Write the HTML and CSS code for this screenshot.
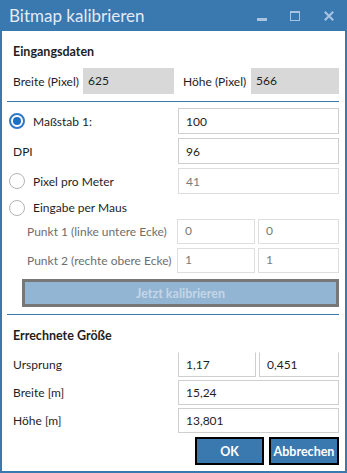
FILE: index.html
```html
<!DOCTYPE html>
<html lang="de">
<head>
    <meta charset="utf-8">
    <title>Bitmap kalibrieren</title>
    <link rel="stylesheet" href="styles.css">
</head>
<body>
    <div class="window">
        <!-- Titelleiste -->
        <div class="titlebar">
            <span class="title">Bitmap kalibrieren</span>
            <div class="caption-buttons">
                <svg class="cap-btn min" width="10" height="10" viewBox="0 0 10 10"><rect x="0" y="7" width="10" height="3" fill="#a9c5e2"/></svg>
                <svg class="cap-btn max" width="10" height="10" viewBox="0 0 10 10"><rect x="0.5" y="0.5" width="9" height="9" fill="none" stroke="#a9c5e2" stroke-width="1"/><rect x="0" y="0" width="10" height="2" fill="#a9c5e2"/></svg>
                <svg class="cap-btn close" width="10" height="10" viewBox="0 0 10 10"><path d="M0.8 0.8 L9.2 9.2 M9.2 0.8 L0.8 9.2" stroke="#a9c5e2" stroke-width="2"/></svg>
            </div>
        </div>

        <div class="content">
            <!-- Eingangsdaten -->
            <div class="heading">Eingangsdaten</div>
            <div class="size-row">
                <span class="label label-w">Breite (Pixel)</span>
                <div class="readonly box-w">625</div>
                <span class="label label-h">Höhe (Pixel)</span>
                <div class="readonly box-h">566</div>
            </div>

            <div class="separator"></div>

            <!-- Kalibrierung -->
            <div class="row first">
                <label class="radio-label"><span class="radio checked"></span>Maßstab 1:</label>
                <div class="input">100</div>
            </div>
            <div class="row">
                <span class="label plain">DPI</span>
                <div class="input">96</div>
            </div>
            <div class="row">
                <label class="radio-label"><span class="radio"></span>Pixel pro Meter</label>
                <div class="input disabled">41</div>
            </div>
            <div class="row mouse">
                <label class="radio-label"><span class="radio"></span>Eingabe per Maus</label>
            </div>
            <div class="row point">
                <span class="label sub">Punkt 1 (linke untere Ecke)</span>
                <div class="pair shifted">
                    <div class="input disabled">0</div>
                    <div class="input disabled">0</div>
                </div>
            </div>
            <div class="row point">
                <span class="label sub">Punkt 2 (rechte obere Ecke)</span>
                <div class="pair shifted">
                    <div class="input disabled">1</div>
                    <div class="input disabled">1</div>
                </div>
            </div>

            <button class="calib-btn" disabled>Jetzt kalibrieren</button>

            <div class="separator sep2"></div>

            <!-- Ergebnis -->
            <div class="heading">Errechnete Größe</div>
            <div class="row result first-result">
                <span class="label plain">Ursprung</span>
                <div class="pair">
                    <div class="input notop">1,17</div>
                    <div class="input notop">0,451</div>
                </div>
            </div>
            <div class="row result">
                <span class="label plain">Breite [m]</span>
                <div class="input">15,24</div>
            </div>
            <div class="row result">
                <span class="label plain">Höhe [m]</span>
                <div class="input">13,801</div>
            </div>

            <div class="dialog-buttons">
                <button class="dlg-btn ok">OK</button>
                <button class="dlg-btn cancel">Abbrechen</button>
            </div>
        </div>
    </div>
</body>
</html>
```

FILE: styles.css
```css
/* Grundlayout */
body {
    margin: 0;
    background: #ffffff;
    font-family: Lato, "Noto Sans", sans-serif;
    font-size: 12px;
    color: #1e1e1e;
}

.window {
    width: 347px;
    height: 473px;
    box-sizing: border-box;
    border: 2px solid #3a78b0;
    border-top: none;
    background: #ffffff;
    display: flex;
    flex-direction: column;
    overflow: hidden;
}

/* Titelleiste */
.titlebar {
    flex: 0 0 31px;
    height: 31px;
    margin: 0 -2px;
    background-color: #3a78b0;
    display: flex;
    align-items: center;
    justify-content: space-between;
    padding-left: 9px;
}

.title {
    color: #e3ebf4;
    font-size: 17px;
    font-family: Lato, sans-serif;
    margin-top: -1px;
}

.caption-buttons {
    display: flex;
    align-items: center;
    padding-right: 13px;
}

.cap-btn {
    display: block;
}

.cap-btn.max {
    margin-left: 23px;
}

.cap-btn.close {
    margin-left: 24px;
}

/* Inhalt */
.content {
    flex: 0 0 auto;
    padding: 0 6px 0 5px;
    display: flex;
    flex-direction: column;
}

.heading {
    font-weight: bold;
    font-size: 12.5px;
    height: 18px;
    line-height: 18px;
    margin-top: 12px;
    padding-left: 6px;
}

.size-row {
    display: flex;
    align-items: center;
    margin-top: 7px;
    height: 26px;
    padding-left: 6px;
}

.label {
    white-space: nowrap;
}

.label-w {
    width: 70px;
}

.label-h {
    width: 68px;
    margin-left: 9px;
}

.readonly {
    height: 26px;
    line-height: 26px;
    background: #d8d8d8;
    padding-left: 5px;
    box-sizing: border-box;
    color: #222222;
}

.box-w {
    width: 91px;
}

.box-h {
    flex: 1;
}

.separator {
    height: 1px;
    background-color: #3a78b0;
    margin-top: 7px;
}

/* Zeilen mit Eingabefeldern */
.row {
    display: flex;
    align-items: center;
    height: 26px;
    margin-top: 4px;
}

.row.first {
    margin-top: 6px;
}

.row > .label,
.row > .radio-label {
    width: 171px;
    flex: 0 0 171px;
    box-sizing: border-box;
}

.row > .input,
.row > .pair {
    flex: 1;
}

.row.mouse {
    height: 23px;
    margin-top: 2px;
}

.row.point {
    height: 25px;
    margin-top: 0;
}

.row.point + .row.point {
    margin-top: 4px;
}

.radio-label {
    display: flex;
    align-items: center;
    padding-left: 2px;
}

.radio {
    width: 16px;
    height: 16px;
    box-sizing: border-box;
    border: 1px solid #b4b4b4;
    border-radius: 50%;
    margin-right: 8px;
    position: relative;
}

.radio.checked {
    border: 2px solid #2f79c8;
}

.radio.checked::after {
    content: "";
    position: absolute;
    left: 2px;
    top: 2px;
    width: 8px;
    height: 8px;
    border-radius: 50%;
    background: #1e6fc6;
}

.plain {
    padding-left: 6px;
}

.sub {
    padding-left: 20px;
    color: #6e6e6e;
}

.input {
    height: 100%;
    box-sizing: border-box;
    border: 1px solid #cfcfcf;
    padding-left: 7px;
    color: #1e1e1e;
    background: #ffffff;
    display: flex;
    align-items: center;
}

.input.disabled {
    color: #7a7a7a;
    border-color: #dedede;
}

.input.notop {
    border-top-color: #ffffff;
}

.pair {
    display: grid;
    grid-template-columns: 78px 1fr;
    gap: 3px;
    height: 100%;
}

.pair.shifted {
    margin-left: -1px;
}

.pair.shifted .input {
    padding-bottom: 3px;
}

/* Kalibrieren-Knopf */
.calib-btn {
    margin: 6px 0 0 15px;
    height: 28px;
    border: 3px solid #777777;
    background: #92b5d3;
    color: #c4d6e7;
    font-family: Lato, sans-serif;
    font-weight: bold;
    font-size: 12.5px;
}

.sep2 {
    margin-top: 7px;
}

.row.result {
    height: 25px;
    margin-top: 3px;
}

.row.first-result {
    margin-top: 7px;
}

/* Dialogknöpfe */
.dialog-buttons {
    display: flex;
    justify-content: flex-end;
    gap: 5px;
    margin-top: 4px;
}

.dlg-btn {
    height: 28px;
    border: 2px solid #000000;
    background: #3a78b0;
    color: #ffffff;
    font-family: Lato, sans-serif;
    font-weight: bold;
    font-size: 12.5px;
    padding: 0;
}

.ok {
    width: 69px;
}

.cancel {
    width: 70px;
}
```
